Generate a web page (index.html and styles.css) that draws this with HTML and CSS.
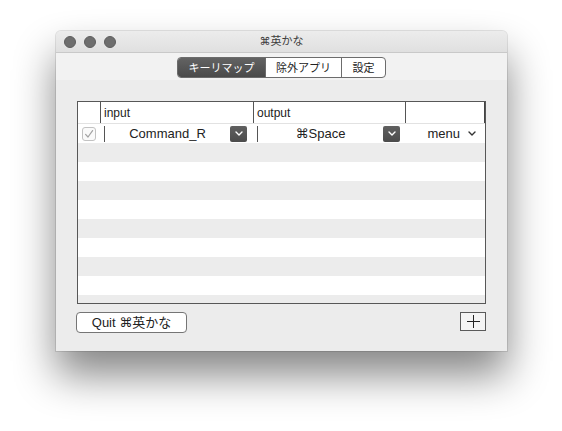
FILE: index.html
```html
<!DOCTYPE html>
<html lang="ja">
<head>
<meta charset="utf-8">
<title>⌘英かな</title>
<link rel="stylesheet" href="styles.css">
</head>
<body>
<div class="window">
  <div class="titlebar">
    <div class="lights"><span class="light"></span><span class="light"></span><span class="light"></span></div>
    <div class="title">⌘英かな</div>
    <div></div>
  </div>
  <div class="toolbar">
    <div class="segmented">
      <span class="seg seg-1 seg-active">キーリマップ</span>
      <span class="seg seg-2">除外アプリ</span>
      <span class="seg seg-3">設定</span>
    </div>
  </div>
  <div class="content">
    <div class="table">
      <div class="thead">
        <div class="th th-check"></div>
        <div class="th th-col">input</div>
        <div class="th th-col">output</div>
        <div class="th th-col"></div>
        <div class="th th-end"></div>
      </div>
      <div class="tbody">
        <div class="row row-data">
          <div class="cell cell-check">
            <span class="checkbox"><svg width="12" height="12" viewBox="0 0 12 12"><path d="M2.6 6.4 L5 9 L9.6 2.6" fill="none" stroke="#a3a3a3" stroke-width="1.2" stroke-linecap="round" stroke-linejoin="round"/></svg></span>
          </div>
          <div class="cell cell-pop cell-input">
            <span class="sep"></span>
            <span class="pop-text">Command_R</span>
            <span class="pop-btn"><svg width="8" height="5" viewBox="0 0 8 5"><path d="M1 1 L4 4 L7 1" fill="none" stroke="#fff" stroke-width="1.4" stroke-linecap="round" stroke-linejoin="round"/></svg></span>
          </div>
          <div class="cell cell-pop cell-output">
            <span class="sep"></span>
            <span class="pop-text">⌘Space</span>
            <span class="pop-btn"><svg width="8" height="5" viewBox="0 0 8 5"><path d="M1 1 L4 4 L7 1" fill="none" stroke="#fff" stroke-width="1.4" stroke-linecap="round" stroke-linejoin="round"/></svg></span>
          </div>
          <div class="cell cell-menu">
            <span class="menu-text">menu</span>
            <svg width="8" height="5" viewBox="0 0 8 5"><path d="M1 1 L4 4 L7 1" fill="none" stroke="#333" stroke-width="1.4" stroke-linecap="round" stroke-linejoin="round"/></svg>
          </div>
        </div>
        <div class="row alt"></div>
        <div class="row"></div>
        <div class="row alt"></div>
        <div class="row"></div>
        <div class="row alt"></div>
        <div class="row"></div>
        <div class="row alt"></div>
        <div class="row"></div>
        <div class="row alt"></div>
      </div>
    </div>
    <div class="footer">
      <button class="btn-quit">Quit ⌘英かな</button>
      <button class="btn-plus"><svg width="13" height="13" viewBox="0 0 13 13"><path d="M6.5 0 V13 M0 6.5 H13" stroke="#222" stroke-width="1"/></svg></button>
    </div>
  </div>
</div>
</body>
</html>
```

FILE: styles.css
```css
* { box-sizing: border-box; }
html, body { margin: 0; background: #ffffff; }
body {
  width: 562px;
  height: 431px;
  overflow: hidden;
  padding: 31px 0 0 56px;
  font-family: "Liberation Sans", "DejaVu Sans", "Noto Sans CJK JP", sans-serif;
  color: #222;
}
.window {
  width: 451px;
  height: 320px;
  background: #ececec;
  border-radius: 5px 5px 0 0;
  box-shadow: 0 0 0 1px rgba(0,0,0,0.10), 0 24px 42px rgba(0,0,0,0.48);
  display: flex;
  flex-direction: column;
}
.titlebar {
  height: 22px;
  border-bottom: 1px solid #c9c9c9;
  background: linear-gradient(#ececec, #e0e0e0);
  border-radius: 5px 5px 0 0;
  display: grid;
  grid-template-columns: 1fr auto 1fr;
  align-items: center;
}
.lights { display: flex; gap: 8px; padding-left: 8px; }
.light {
  width: 12px; height: 12px; border-radius: 50%;
  background: #6e6e6e;
  border: 1px solid #5e5e5e;
}
.title {
  font-size: 11px;
  color: #3c3c3c;
  font-family: "DejaVu Sans", "Noto Sans CJK JP", sans-serif;
  line-height: 1;
}
.toolbar {
  height: 27px;
  background: #f2f2f2;
  display: flex;
  justify-content: center;
  padding-top: 4px;
}
.segmented {
  display: flex;
  height: 21px;
  border: 1px solid #6c6c6c;
  border-radius: 4px;
  overflow: hidden;
  background: #fff;
}
.seg {
  display: flex;
  align-items: center;
  justify-content: center;
  font-family: "Noto Sans CJK JP", sans-serif;
  font-size: 11px;
  color: #222;
  line-height: 1;
}
.seg-1 { width: 87px; }
.seg-2 { width: 76px; border-left: 1px solid #6c6c6c; }
.seg-3 { width: 44px; border-left: 1px solid #6c6c6c; }
.seg-active {
  background: linear-gradient(#636363, #4a4a4a);
  color: #fff;
}
.content {
  flex: 1;
  padding: 21px 21px 0 21px;
}
.table {
  height: 203px;
  border: 1px solid #575757;
  background: #fff;
  display: flex;
  flex-direction: column;
  overflow: hidden;
}
.thead {
  height: 22px;
  flex: none;
  display: grid;
  grid-template-columns: 22px 153px 152px 79px 1px;
  border-bottom: 1px solid #e2e2e2;
  font-size: 12px;
  color: #222;
}
.th { display: flex; align-items: center; padding-left: 3px; }
.th-col { border-left: 1px solid #555; }
.th-end { background: #444; padding: 0; }
.tbody { flex: 1; overflow: hidden; }
.row { height: 19px; }
.row.alt { background: #ececec; }
.row-data {
  display: grid;
  grid-template-columns: 26px 153px 148px 80px;
  align-items: center;
  font-size: 13px;
  color: #222;
}
.cell { display: flex; align-items: center; height: 19px; }
.cell-check { padding-left: 4px; }
.checkbox {
  width: 14px; height: 14px;
  border: 1px solid #c2c2c2;
  border-radius: 3px;
  background: #fafafa;
  display: flex;
  align-items: center;
  justify-content: center;
}
.sep { width: 1px; height: 16px; background: #555; flex: none; }
.pop-text { flex: 1; text-align: center; white-space: nowrap; }
.pop-btn {
  width: 17px; height: 16px;
  flex: none;
  border-radius: 2px;
  background: linear-gradient(#606060, #4b4b4b);
  display: flex;
  align-items: center;
  justify-content: center;
}
.cell-input .pop-btn { margin-right: 10px; }
.cell-output .pop-btn { margin-right: 5px; }
.cell-menu {
  justify-content: flex-end;
  gap: 8px;
  padding-right: 9px;
}
.footer {
  margin-top: 8px;
  display: flex;
  justify-content: space-between;
  align-items: flex-start;
}
.btn-quit {
  margin: 0 0 0 -1px;
  width: 111px;
  height: 21px;
  padding: 0;
  border: 1px solid #757575;
  border-radius: 4px;
  background: #fff;
  font-family: "Liberation Sans", "DejaVu Sans", "Noto Sans CJK JP", sans-serif;
  font-size: 13px;
  color: #222;
  line-height: 1;
}
.btn-plus {
  margin: 0;
  width: 26px;
  height: 19px;
  padding: 0;
  border: 1px solid #5a5a5a;
  background: #f4f4f4;
  display: flex;
  align-items: center;
  justify-content: center;
}
```
